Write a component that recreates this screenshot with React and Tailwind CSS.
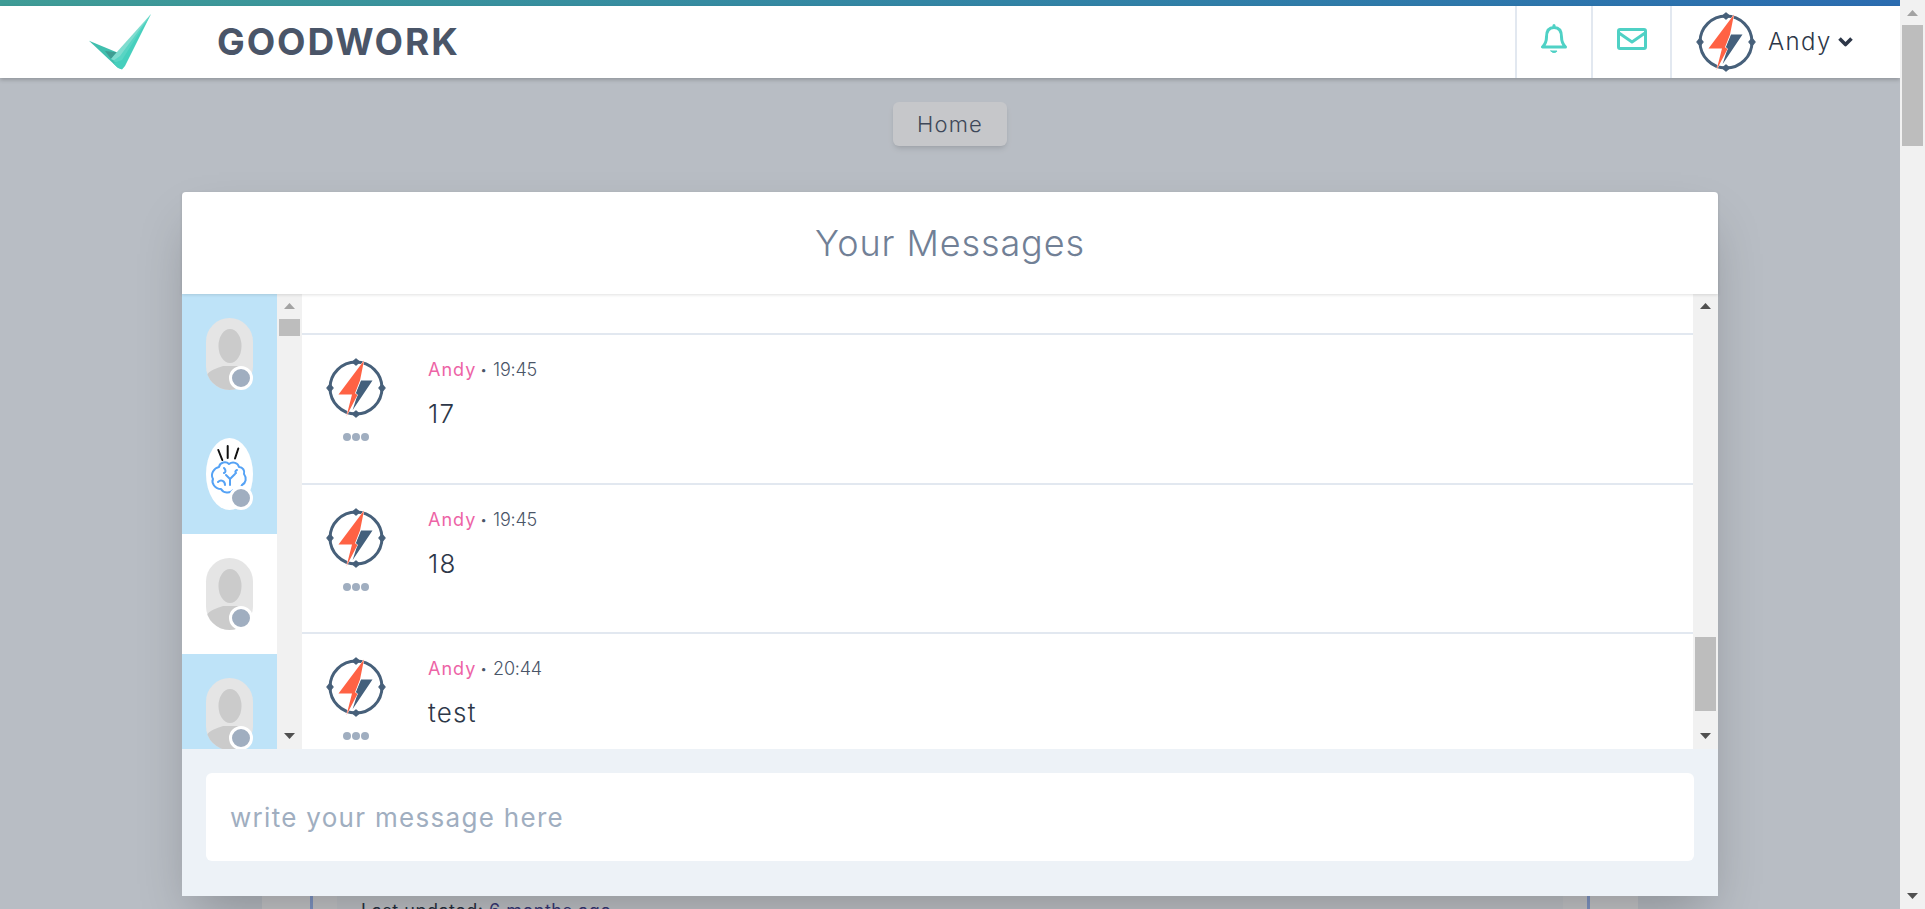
const FONT = "font-['Inter','Open_Sans',sans-serif]"

function Arrow({ up, color = '#505050' }) {
  return (
    <svg viewBox="0 0 11 6" className="w-[11px] h-[6px]">
      <polygon points={up ? '5.5,0 11,6 0,6' : '0,0 11,0 5.5,6'} fill={color} />
    </svg>
  )
}

function Bolt() {
  const ring = '#47607a'
  return (
    <svg viewBox="0 0 60 60" className="w-[60px] h-[60px] shrink-0">
      <circle cx="30" cy="30" r="26" fill="#fff" stroke={ring} strokeWidth="3" />
      <g fill={ring} stroke={ring} strokeWidth="1.4" strokeLinejoin="round">
        <polygon points="30,1 33.5,4 30,7 26.5,4" />
        <polygon points="30,53 33.5,56 30,59 26.5,56" />
        <polygon points="1,30 4,26.5 7,30 4,33.5" />
        <polygon points="53,30 56,26.5 59,30 56,33.5" />
      </g>
      <polygon points="35,22.5 46.5,22.5 26.7,52 31.5,36.5 29.8,35.3" fill="#44607c" />
      <polygon
        points="38,2.5 12.5,36.6 26,36.6 20.5,58 31.5,37 29,35.3 34,22.5"
        fill="#ff6244"
        stroke="#fff"
        strokeWidth="0.8"
        paintOrder="stroke"
      />
    </svg>
  )
}

function Logo() {
  return (
    <svg viewBox="0 0 62 56" className="w-[62px] h-[56px]">
      <polygon points="0,26.7 27.7,38.3 33,42 32,55 28,53" fill="#40bfae" />
      <polygon points="16,37 27.7,38.3 22,45" fill="#3f9d92" />
      <polygon points="62,0 27.7,38.3 22,45 30,49" fill="#7fdccf" />
      <polygon points="62,0 31,42 24,47 33,51" fill="#58d5c4" />
      <polygon points="62,0 36,52 33,55.5 29,54 24,49 33,46" fill="#46cfbd" />
    </svg>
  )
}

function Person() {
  return (
    <svg viewBox="0 0 47 72" className="w-full h-full" preserveAspectRatio="none">
      <ellipse cx="24" cy="28" rx="11.5" ry="17" fill="#cbcbcb" />
      <path d="M0 72 V58 C3 52 12 50 17 48 L31 48 C36 50 44 52 47 58 V72 Z" fill="#cbcbcb" />
    </svg>
  )
}

function Brain() {
  return (
    <svg viewBox="0 0 47 72" className="w-full h-full" fill="none">
      <g stroke="#111" strokeWidth="2" strokeLinecap="round">
        <path d="M12.3 12 L16.3 22" />
        <path d="M21.7 8 L21.7 20" />
        <path d="M32.3 10.5 L29 20.5" />
      </g>
      <g stroke="#55a2f5" strokeWidth="2" strokeLinecap="round" strokeLinejoin="round">
        <path d="M13 29 C14 24 20 23 23 26 C27 23 32 25 33 29 C37 29 39 33 38 36 C41 40 40 45 36 47 C35 51 30 54 27 52 C24 56 17 55 15 51 C9 51 5 45 7 41 C4 36 8 30 13 29 Z" />
        <path d="M20 37 L24 41 L29 36" />
        <path d="M24 41 L24 47" />
        <path d="M12 44 C15 41 19 43 19 47" />
        <path d="M18 30 C20 32 20 34 18 35" />
        <path d="M31 32 C29 33 29 34 30 35" />
      </g>
    </svg>
  )
}

function Contact({ active, shape = 'rounded-[24px]', brain }) {
  return (
    <div className={`h-[120px] shrink-0 px-[24px] py-[24px] ${active ? 'bg-[#bee3f8]' : 'bg-white'}`}>
      <div className="relative w-[47px] h-[72px]">
        <div className={`w-full h-full overflow-hidden ${shape} ${brain ? 'bg-white' : 'bg-[#e5e5e5]'}`}>
          {brain ? <Brain /> : <Person />}
        </div>
        <div className="absolute right-0 bottom-0 w-[24px] h-[24px] rounded-full bg-[#a0aec0] border-[3px] border-white" />
      </div>
    </div>
  )
}

function Message({ time, text }) {
  return (
    <div className="h-[149.5px] shrink-0 border-t-2 border-[#e2e8f0] bg-white flex pl-[24px] pt-[23px]">
      <div className="w-[60px] flex flex-col items-center">
        <Bolt />
        <div className="flex gap-[1px] mt-[15px]">
          <span className="w-[8px] h-[8px] rounded-full bg-[#a0aec0]" />
          <span className="w-[8px] h-[8px] rounded-full bg-[#a0aec0]" />
          <span className="w-[8px] h-[8px] rounded-full bg-[#a0aec0]" />
        </div>
      </div>
      <div className="ml-[42px] font-light text-[#4a5568]">
        <div className="flex items-center text-[18px] leading-[24px]">
          <span className="text-[#ed64a6] font-normal tracking-[1px]">Andy</span>
          <span className="text-[12px] ml-[4px] mr-[6px]">•</span>
          <span className="tracking-[-0.2px]">{time}</span>
        </div>
        <div className="text-[26px] leading-[36px] mt-[14px] text-[#2d3748] tracking-[1.2px]">{text}</div>
      </div>
    </div>
  )
}

function Track({ children, className = '' }) {
  return <div className={`w-[25px] shrink-0 bg-[#f1f1f1] flex flex-col items-center ${className}`}>{children}</div>
}

export default function App() {
  return (
    <div className={`${FONT} h-[909px] overflow-hidden flex bg-[#edf2f7]`}>
      <div className="relative flex-1 min-w-0 overflow-hidden">
        <div className="h-[6px] bg-gradient-to-r from-[#3f9c96] to-[#2b6cb0]" />
        <header className="relative z-20 h-[72px] bg-white flex items-center shadow-[0_2px_4px_rgba(0,0,0,0.2)]">
          <div className="ml-[89px]"><Logo /></div>
          <div className="ml-[66px] text-[37px] font-bold text-[#4a5568] tracking-[1.9px]">GOODWORK</div>
          <div className="ml-auto flex h-full">
            <div className="w-[76px] border-l-2 border-[#e2e8f0] flex items-center justify-center pb-[6px]">
              <svg viewBox="0 0 26 30" className="w-[26px] h-[30px]" fill="none" stroke="#4fd1c5" strokeWidth="3" strokeLinejoin="round" strokeLinecap="round">
                <path d="M13 3.5 C7 3.5 5.5 8 5.5 13 C5.5 18 4 20.5 1.5 23 H24.5 C22 20.5 20.5 18 20.5 13 C20.5 8 19 3.5 13 3.5 Z" />
                <path d="M13 1.5 V3" />
                <path d="M10 27 H16 C15 29 11 29 10 27 Z" fill="#4fd1c5" strokeWidth="1" />
              </svg>
            </div>
            <div className="w-[79px] border-l-2 border-[#e2e8f0] flex items-center justify-center pb-[6px]">
              <svg viewBox="0 0 30 22" className="w-[30px] h-[22px]" fill="none" stroke="#4fd1c5" strokeWidth="3" strokeLinejoin="round" strokeLinecap="round">
                <rect x="1.5" y="1.5" width="27" height="19" rx="1.5" />
                <path d="M2 5 L15 14 L28 5" />
              </svg>
            </div>
            <div className="w-[230px] border-l-2 border-[#e2e8f0] flex items-center pl-[24px]">
              <Bolt />
              <span className="ml-[12px] text-[24px] font-light text-[#2d3748] tracking-[1.4px]">Andy</span>
              <svg viewBox="0 0 15 10" className="ml-[6px] w-[15px] h-[10px]" fill="none" stroke="#2d3748" strokeWidth="3.6" strokeLinejoin="round">
                <path d="M1.5 1.5 L7.5 7.5 L13.5 1.5" />
              </svg>
            </div>
          </div>
        </header>

        <div className="flex justify-center mt-[24px]">
          <div className="w-[114px] h-[44px] rounded-[6px] bg-white shadow-md flex items-center justify-center text-[22px] font-light text-[#4a5568] tracking-[1.2px]">Home</div>
        </div>

        {/* page behind the modal, only its top edge peeks out */}
        <div className="mx-[262px] mt-[654px] h-[200px] bg-white pt-[48px] px-[48px]">
          <div className="h-full border-x-[3px] border-[#a3bffa] px-[24px]">
            <div className="h-full bg-[#f7fafc] pt-[49px] pl-[24px] text-[18px] leading-[27px] text-[#2d3748] tracking-[0.5px]">
              Last updated: <span className="text-[#434190]">6 months ago</span>
            </div>
          </div>
        </div>

        <div className="absolute inset-x-0 top-[78px] bottom-0 z-10 bg-[rgba(26,32,44,0.25)] px-[182px] pt-[113.5px]">
          <div className="bg-white rounded-t-[4px] shadow-2xl">
            <div className="relative h-[102.5px] flex items-center justify-center text-[36px] font-light text-[#718096] tracking-[0.9px] shadow-[0_1px_3px_rgba(0,0,0,0.12)]">Your Messages</div>
            <div className="flex h-[455px]">
              <div className="w-[95px] shrink-0 overflow-hidden flex flex-col">
                <Contact active />
                <Contact active shape="rounded-[50%]" brain />
                <Contact />
                <Contact active />
              </div>
              <Track>
                <div className="mt-[9px] flex"><Arrow up color="#a3a3a3" /></div>
                <div className="w-[21px] h-[17px] bg-[#bdbdbd] mt-[10px]" />
                <div className="mt-auto mb-[10px] flex"><Arrow /></div>
              </Track>
              <div className="flex-1 min-w-0 overflow-hidden flex flex-col">
                <div className="h-[39px] shrink-0 bg-white" />
                <Message time="19:45" text="17" />
                <Message time="19:45" text="18" />
                <Message time="20:44" text="test" />
              </div>
              <Track>
                <div className="mt-[9px] flex"><Arrow up /></div>
                <div className="w-[21px] h-[74px] bg-[#bdbdbd] mt-[328px]" />
                <div className="mt-auto mb-[10px] flex"><Arrow /></div>
              </Track>
            </div>
            <div className="h-[147px] bg-[#edf2f7] px-[24px] pt-[24px]">
              <div className="h-[88px] rounded-[6px] bg-white flex items-center pl-[24px] text-[26px] text-[#a0aec0] tracking-[1.3px]">write your message here</div>
            </div>
          </div>
        </div>
      </div>

      <Track className="relative z-30">
        <div className="mt-[10px] flex"><Arrow up color="#a3a3a3" /></div>
        <div className="w-[21px] h-[121px] bg-[#bdbdbd] mt-[9px]" />
        <div className="mt-auto mb-[10px] flex"><Arrow /></div>
      </Track>
    </div>
  )
}
